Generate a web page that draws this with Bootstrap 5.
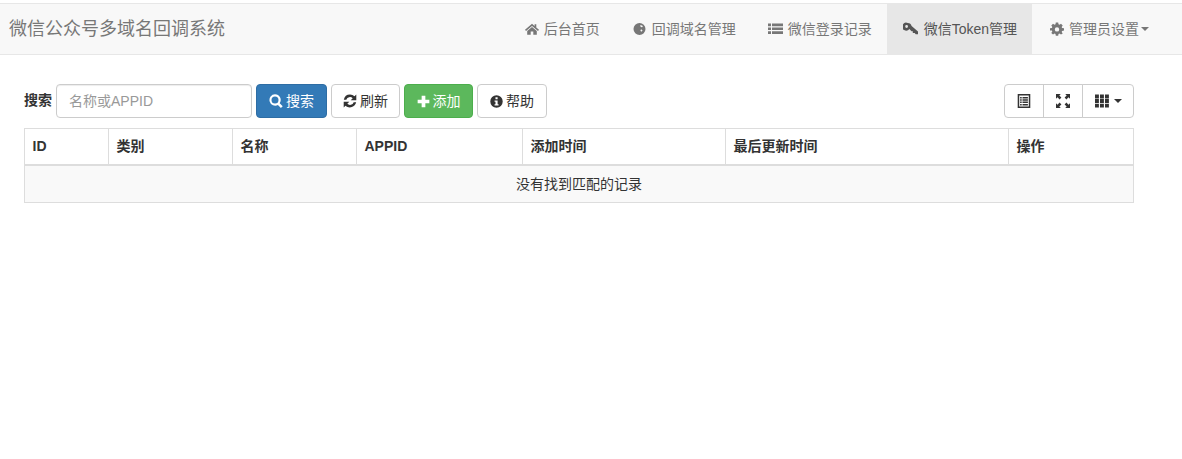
<!DOCTYPE html>
<html lang="zh">
<head>
<meta charset="utf-8">
<title>微信公众号多域名回调系统</title>
<link href="https://cdn.jsdelivr.net/npm/bootstrap@5.3.0/dist/css/bootstrap.min.css" rel="stylesheet">
<style>
body{font-family:"Liberation Sans","Noto Sans CJK SC",sans-serif;font-size:14px;line-height:20px;color:#333;background:#fff;padding-top:3px}
.top-bar{height:52px;background:#f8f8f8;border-top:1px solid #e7e7e7;border-bottom:1px solid #e7e7e7;padding:0 18px 0 9px}
.top-brand{font-size:18px;color:#777;text-decoration:none;line-height:50px}
.top-link{display:flex;align-items:center;height:50px;padding:0 15px;color:#777;text-decoration:none}
.top-link.on{background:#e7e7e7;color:#555}
.ico{width:22px;flex:none;display:inline-flex;align-items:center}
.ico svg{display:block;fill:currentColor}
.ico-home{padding-left:3px}
.ico-globe{padding-left:3px}
.ico-list{padding-left:2px}
.ico-key{padding-left:1px}
.ico-gear{padding-left:3px}
.drop-caret{width:0;height:0;margin-left:2px;border-top:4px solid;border-left:4px solid transparent;border-right:4px solid transparent}
.page-body{width:1134px;padding:29px 0 0 24px}
.tool-row{height:34px;margin-bottom:10px}
.tool-label{font-weight:700;margin:-2px 4px 0 0;font-size:14px;width:28px;flex:none}
.tool-input{width:196px;height:34px;padding:6px 12px;font-size:14px;border:1px solid #ccc;border-radius:4px;color:#555;box-shadow:inset 0 1px 1px rgba(0,0,0,.075)}
.tool-input::placeholder{color:#999}
.act-btn{display:inline-flex;align-items:center;justify-content:center;height:34px;padding:0;font-size:14px;line-height:20px;border-radius:4px;gap:3px;margin-left:4px}
.act-btn svg{fill:currentColor;display:block}
.act-plain{color:#333;background:#fff;border:1px solid #ccc}
.act-blue{width:71px;color:#fff;background:#337ab7;border:1px solid #2e6da4}
.act-green{width:69px;color:#fff;background:#5cb85c;border:1px solid #4cae4c}
.w-refresh{width:69px}
.w-help{width:70px}
.view-group .act-plain{margin:0;border-radius:0;margin-left:-1px}
.view-group .act-plain:first-child{width:40px;border-radius:4px 0 0 4px;margin-left:0}
.view-group .act-plain:nth-child(2){width:40px}
.view-group .act-plain:last-child{width:52px;border-radius:0 4px 4px 0;gap:5px}
.view-group .drop-caret{margin:0}
.data-grid{width:1109px;table-layout:fixed;border-collapse:collapse;margin:0}
.data-grid th,.data-grid td{border:1px solid #ddd;padding:8px;line-height:20px;font-size:14px;color:#333}
.data-grid th{font-weight:700;padding:7px 8px 8px 7.5px;border-bottom-width:2px}
.data-grid td{background:#f9f9f9;text-align:center}
.c1{width:84px}.c2,.c3{width:124px}.c4{width:166px}.c5{width:203px}.c6{width:283px}.c7{width:125px}
</style>
</head>
<body>
<nav class="top-bar d-flex align-items-center justify-content-between">
  <a class="top-brand" href="#">微信公众号多域名回调系统</a>
  <div class="d-flex">
    <a class="top-link" href="#"><span class="ico ico-home"><svg width="14" height="14" viewBox="0 0 14 14"><path d="M7 1.800 0 7.700l1 1.200L7 3.900l6 5 1-1.200-2.700-2.300V2.200H9.600v1.700zM7 5 2.200 9v3.800h3.500V9.600h2.600v3.200h3.500V9z"/></svg></span>后台首页</a>
    <a class="top-link" href="#"><span class="ico ico-globe"><svg width="13" height="14" viewBox="0 0 13 14"><path fill-rule="evenodd" d="M6.500 1a6 6 0 1 1 0 12 6 6 0 0 1 0-12zM7.500 3 7.200 4.200l1.300 1 1.200-.2-.2-1.200zM8 7.200 7.400 8.800l1 1 1.200-1.600z"/></svg></span>回调域名管理</a>
    <a class="top-link" href="#"><span class="ico ico-list"><svg width="15" height="14" viewBox="0 0 15 14"><path d="M0 1.500h3v2.700H0zM4 1.500h11v2.700H4zM0 5.400h3v2.700H0zM4 5.400h11v2.700H4zM0 9.300h3V12H0zM4 9.300h11V12H4z"/></svg></span>微信登录记录</a>
    <a class="top-link on" href="#"><span class="ico ico-key"><svg width="16" height="15" viewBox="0 0 16 15"><path fill-rule="evenodd" d="M4.800 1a4 4 0 0 1 3.800 2.900l6.400 5.600v2.700h-2.300l-1-1.200H9.800V9.200H8.500L6.400 7.100A4 4 0 1 1 4.800 1zM3.600 3.100a1.400 1.400 0 1 0 0 2.800 1.400 1.400 0 0 0 0-2.800z"/></svg></span>微信Token管理</a>
    <a class="top-link" href="#"><span class="ico ico-gear"><svg width="14" height="14" viewBox="0 0 14 14"><path fill-rule="evenodd" d="M5.800.5h2.400l.3 1.800 1 .4L11 1.700 12.700 3.400l-1 1.500.4 1 1.900.3v2.400l-1.900.3-.4 1 1 1.500L11 12.600l-1.500-1-1 .4-.3 1.800H5.800l-.3-1.800-1-.4-1.500 1-1.700-1.700 1-1.500-.4-1L0 8.600V6.200l1.900-.3.400-1-1-1.500L3 1.700l1.500 1 1-.4zM7 5.200a2.200 2.200 0 1 0 0 4.400 2.200 2.200 0 0 0 0-4.400z"/></svg></span>管理员设置<span class="drop-caret"></span></a>
  </div>
</nav>
<main class="page-body">
  <div class="tool-row d-flex align-items-center justify-content-between">
    <div class="d-flex align-items-center">
      <span class="tool-label">搜索</span>
      <input class="tool-input" type="text" placeholder="名称或APPID">
      <button class="btn act-btn act-blue" type="button"><svg width="14" height="14" viewBox="0 0 14 14"><path fill-rule="evenodd" d="M6 .3a5.700 5.700 0 0 1 4.700 8.900l3 3-1.800 1.800-3-3A5.700 5.700 0 1 1 6 .3zm0 2.200a3.500 3.500 0 1 0 0 7 3.500 3.500 0 0 0 0-7z"/></svg>搜索</button>
      <button class="btn act-btn act-plain w-refresh" type="button"><svg width="14" height="14" viewBox="0 0 14 14"><path d="M7 .5a6.500 6.500 0 0 1 4.500 1.800L13.300.6V6.200H7.700l2-2A3.900 3.900 0 0 0 3.300 5.700H.8A6.500 6.500 0 0 1 7 .5zM.7 7.800h5.600l-2 2a3.900 3.900 0 0 0 6.400-1.500h2.500a6.500 6.500 0 0 1-10.700 3.400L.7 13.400z"/></svg>刷新</button>
      <button class="btn act-btn act-green" type="button"><svg width="13" height="13" viewBox="0 0 14 14"><path d="M5 .7h4v4.300h4.300v4H9v4.300H5V9H.7V5H5z"/></svg>添加</button>
      <button class="btn act-btn act-plain w-help" type="button"><svg width="13" height="13" viewBox="0 0 14 14"><path fill-rule="evenodd" d="M7 .3a6.700 6.700 0 1 1 0 13.400A6.700 6.700 0 0 1 7 .3zM5.900 2.500v2.100h2.300V2.500zM4.900 5.800v1.400h1V10h-1v1.400h4.300V10h-1V5.800z"/></svg>帮助</button>
    </div>
    <div class="view-group d-flex">
      <button class="btn act-btn act-plain" type="button" aria-label="切换"><svg width="14" height="14" viewBox="0 0 14 14"><path fill-rule="evenodd" d="M.7 0h12.600v14H.7zM2.200 1.500v11h9.600v-11zM3.100 3h1.600v1.500H3.100zM5.500 3h5.400v1.500H5.500zM3.100 5.300h1.600v1.500H3.100zM5.500 5.300h5.400v1.500H5.500zM3.100 7.600h1.600v1.500H3.100zM5.500 7.600h5.400v1.500H5.500zM3.100 9.900h1.600v1.500H3.100zM5.500 9.900h5.400v1.500H5.500z"/></svg></button>
      <button class="btn act-btn act-plain" type="button" aria-label="全屏"><svg width="14" height="14" viewBox="0 0 14 14"><path d="M0 0h4.800L3.300 1.500l2.100 2.100-1.800 1.800L1.500 3.300 0 4.800zM14 0v4.800l-1.500-1.500-2.100 2.100-1.800-1.800 2.100-2.100L9.200 0zM0 14V9.200l1.500 1.500 2.100-2.100 1.800 1.800-2.100 2.100L4.800 14zM14 14H9.200l1.500-1.500-2.100-2.100 1.800-1.800 2.100 2.100L14 9.200z"/></svg></button>
      <button class="btn act-btn act-plain" type="button" aria-label="列"><svg width="14" height="14" viewBox="0 0 14 14"><path d="M0 .5h3.900v3.900H0zM5 .5h3.900v3.900H5zM10 .5h3.900v3.900H10zM0 5.100h3.900V9H0zM5 5.100h3.900V9H5zM10 5.100h3.900V9H10zM0 9.700h3.900v3.900H0zM5 9.700h3.900v3.900H5zM10 9.700h3.900v3.900H10z"/></svg><span class="drop-caret"></span></button>
    </div>
  </div>
  <table class="data-grid">
    <colgroup><col class="c1"><col class="c2"><col class="c3"><col class="c4"><col class="c5"><col class="c6"><col class="c7"></colgroup>
    <thead><tr><th>ID</th><th>类别</th><th>名称</th><th>APPID</th><th>添加时间</th><th>最后更新时间</th><th>操作</th></tr></thead>
    <tbody><tr><td colspan="7">没有找到匹配的记录</td></tr></tbody>
  </table>
</main>
<script src="https://cdn.jsdelivr.net/npm/bootstrap@5.3.0/dist/js/bootstrap.bundle.min.js"></script>
</body>
</html>
